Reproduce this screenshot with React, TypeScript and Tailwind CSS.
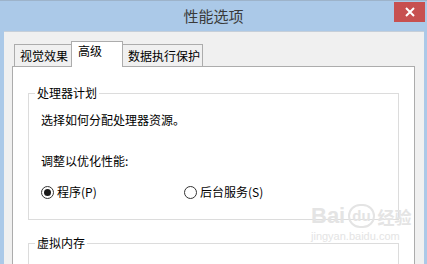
import React from "react";

const font = { fontFamily: '"Noto Sans CJK SC", "Noto Sans", sans-serif' };

function Radio({ checked, label }: { checked?: boolean; label: string }) {
  return (
    <label className="flex items-center gap-[3px] h-[16px]">
      <span className="w-[13px] h-[13px] rounded-full border border-[#333333] bg-white flex items-center justify-center">
        {checked && <span className="w-[7px] h-[7px] rounded-full bg-[#1a1a1a]" />}
      </span>
      <span>{label}</span>
    </label>
  );
}

function GroupBox({ title, className, children }: { title: string; className?: string; children: React.ReactNode }) {
  return (
    <div className={`relative border border-[#dcdcdc] pl-[12px] ${className ?? ""}`}>
      {/* 标题压在边框上 */}
      <span className="absolute left-[6px] -top-[9px] bg-white px-[2px] leading-[16px]">{title}</span>
      {children}
    </div>
  );
}

export default function App() {
  const tabs = [
    { name: "视觉效果", active: false, w: "w-[58px]" },
    { name: "高级", active: true, w: "w-[52px]" },
    { name: "数据执行保护", active: false, w: "w-[81px]" },
  ];

  return (
    <div
      className="w-[427px] h-[264px] overflow-hidden bg-[#abc9e8] border-t border-[#9db3ca] text-[12px] leading-[16px] text-black relative"
      style={font}
    >
      {/* 标题栏 */}
      <div className="h-[30px] relative flex items-center justify-center">
        <span className="text-[15px] text-[#3a3a3a] leading-[20px] -mt-[1px]">性能选项</span>
        <button className="absolute right-[2px] top-[1px] w-[31px] h-[20px] bg-[#c75050] flex items-center justify-center">
          <svg width="10" height="10" viewBox="0 0 10 10">
            <path d="M1 1 L9 9 M9 1 L1 9" stroke="white" strokeWidth="2" />
          </svg>
        </button>
      </div>

      {/* 窗体 */}
      <div className="ml-[4px] mr-[3px] h-[240px] bg-[#f0f0f0] border-t border-[#c6cfd9] pl-[8px] pr-[9px] pt-[9px]">
        <div className="flex items-end pl-[2px] relative z-10">
          {tabs.map((t) =>
            t.active ? (
              <div
                key={t.name}
                className={`${t.w} h-[26px] -mb-px bg-white border border-b-0 border-[#acacac] pl-[6px] pt-[1px] -ml-px`}
              >
                {t.name}
              </div>
            ) : (
              <div
                key={t.name}
                className={`${t.w} h-[22px] bg-[#f0f0f0] border border-b-0 border-[#acacac] pl-[5px] pt-[3px] -ml-px first:ml-0`}
              >
                {t.name}
              </div>
            )
          )}
        </div>

        {/* 选项卡内容 */}
        <div className="bg-white border border-[#acacac] h-[200px] px-[15px] pt-[26px]">
          <GroupBox title="处理器计划" className="pt-[18px] pb-[19px]">
            <div>选择如何分配处理器资源。</div>
            <div className="mt-[25px]">调整以优化性能:</div>
            <div className="flex mt-[15px]">
              <div className="w-[143px]">
                <Radio checked label="程序(P)" />
              </div>
              <Radio label="后台服务(S)" />
            </div>
          </GroupBox>

          <GroupBox title="虚拟内存" className="mt-[23px] pt-[18px] pb-[19px]">
            <div>分页文件是硬盘上的一块区域，Windows 当作 RAM 使用。</div>
          </GroupBox>
        </div>
      </div>

      {/* 水印 */}
      <div className="absolute left-[311px] top-[203px] text-[#e4e4e4] pointer-events-none select-none flex flex-col items-start">
        <div className="flex items-end gap-[3px]">
          <span className="text-[22px] leading-[24px] font-bold" style={{ fontFamily: '"Liberation Sans", sans-serif' }}>Bai</span>
          <span className="text-[15px] leading-[20px] font-bold border-2 border-[#e4e4e4] rounded-full px-[2px]" style={{ fontFamily: '"Liberation Sans", sans-serif' }}>du</span>
          <span className="text-[17px] leading-[22px] font-bold">经验</span>
        </div>
        <span className="text-[11px] leading-[14px] mt-[1px]" style={{ fontFamily: '"Liberation Sans", sans-serif' }}>jingyan.baidu.com</span>
      </div>
    </div>
  );
}
